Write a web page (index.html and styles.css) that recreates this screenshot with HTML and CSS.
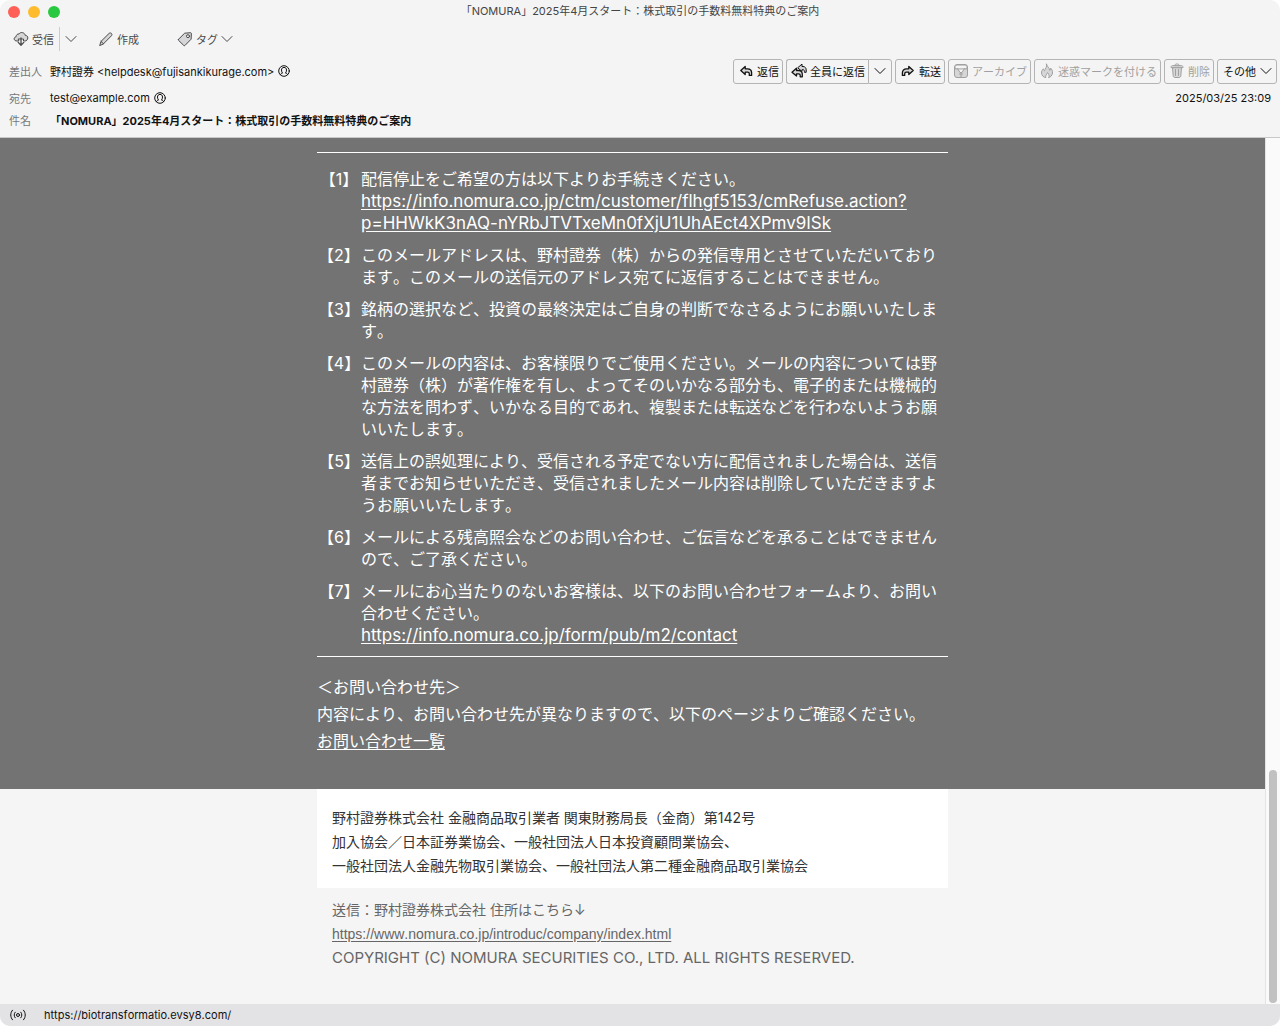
FILE: index.html
```html
<!DOCTYPE html>
<html lang="ja">
<head>
    <meta charset="UTF-8">
    <meta name="viewport" content="width=device-width, initial-scale=1.0">
    <title>「NOMURA」2025年4月スタート：株式取引の手数料無料特典のご案内</title>
    <link rel="stylesheet" href="styles.css">
</head>
<body>
    <div class="window">
        <div class="titlebar">
            <div class="lights">
                <span class="light close"></span>
                <span class="light minimize"></span>
                <span class="light zoom"></span>
            </div>
            <div class="window-title">「NOMURA」2025年4月スタート：株式取引の手数料無料特典のご案内</div>
        </div>

        <div class="toolbar">
            <button class="tool receive">
                <svg class="icon" viewBox="0 0 16 16"><path class="tint" d="M5.500 10H4C2.300 10 1.200 9.200 1.200 7.900C1.200 6.700 2 5.900 3.100 5.700C3.200 3.800 4.500 2.800 6 3C6.800 1.800 8 1.300 9.300 1.600C11 1.900 12 3 12.200 4.300C14 4.500 14.900 5.500 14.800 7C14.700 8.800 13.500 10 11.800 10H10.500V8H5.500z"/><path class="bold" d="M8 7V14M5.200 11.400L8 14.200L10.800 11.400"/></svg>
                受信
            </button>
            <button class="tool split" aria-label="受信メニュー">
                <svg class="chevron" viewBox="0 0 12 12"><path d="M1 3.500L6 8.500L11 3.500"/></svg>
            </button>
            <button class="tool compose">
                <svg class="icon" viewBox="0 0 16 16"><path class="tint" d="M1.800 14.200L3 10.400L11 2.500C11.800 1.700 12.700 1.700 13.400 2.400C14.100 3.100 14.100 4 13.400 4.800L5.500 12.800z"/><path d="M3 10.400L5.500 12.800"/></svg>
                作成
            </button>
            <button class="tool">
                <svg class="icon" viewBox="0 0 16 16"><path class="tint" d="M1.500 8.300L7.700 2.200L13.500 1.700C14 1.700 14.400 2 14.400 2.600L14.100 8.200L8 14.400C7.600 14.800 7.100 14.800 6.700 14.400L1.500 9.300C1.200 9 1.200 8.600 1.500 8.300z"/><circle class="hole" cx="11" cy="5.200" r="1.500"/></svg>
                タグ
                <svg class="chevron" viewBox="0 0 12 12"><path d="M1 3.500L6 8.500L11 3.500"/></svg>
            </button>
        </div>

        <div class="header">
            <div class="row row-from">
                <span class="label">差出人</span>
                <span class="value">野村證券 &lt;helpdesk@fujisankikurage.com&gt;</span>
                <svg class="person" viewBox="0 0 12 12"><circle cx="6" cy="6" r="5.300"/><path d="M2.200 9.700C2.500 8.800 3.500 8.600 4.500 8.100C3.900 7.300 3.500 6.500 3.500 5C3.500 3.400 4.500 2.400 6 2.400S8.500 3.400 8.500 5C8.500 6.500 8.100 7.300 7.500 8.100C8.500 8.600 9.500 8.800 9.800 9.700"/></svg>
                <div class="actions">
                    <button class="action">
                        <svg class="icon" viewBox="0 0 16 16"><path class="tint bold" d="M7.200 3.500V5.800H9.500C12 5.800 13.600 7.500 13.600 9.800V12.400H11.300V10.800C11.300 9.700 10.700 9.200 9.700 9.200H7.200V11.500L2.800 7.500z"/></svg>
                        返信
                    </button>
                    <div class="action-pair">
                        <button class="action">
                            <svg class="icon" viewBox="0 0 16 16"><path class="tint" d="M11 1.500V3.500H12C14 3.500 15.200 5 15.200 7V9.300H13.400V8.300C13.400 7.200 12.800 6.700 11.900 6.700H11V8.500L7 5z"/><path class="tint bold" d="M5.500 5.300V7.500H7.800C10 7.500 11.300 9.200 11.300 11.200V13.800H9.200V12.300C9.200 11.200 8.600 10.800 7.700 10.800H5.500V13L1 9.200z"/></svg>
                            全員に返信
                        </button>
                        <button class="action drop" aria-label="返信メニュー">
                            <svg class="chevron" viewBox="0 0 12 12"><path d="M1 3.500L6 8.500L11 3.500"/></svg>
                        </button>
                    </div>
                    <button class="action">
                        <svg class="icon" viewBox="0 0 16 16"><path class="tint bold" d="M8.800 3.500V5.800H6.500C4 5.800 2.400 7.500 2.400 9.800V12.400H4.700V10.800C4.700 9.700 5.300 9.200 6.300 9.200H8.800V11.500L13.200 7.500z"/></svg>
                        転送
                    </button>
                    <button class="action" disabled>
                        <svg class="icon" viewBox="0 0 16 16"><rect class="tint" x="1.500" y="1.500" width="13" height="13" rx="2.500"/><path class="hole" d="M2 5.500V3.500L3.500 2H12.500L14 3.500V5.500zM4.500 5.500L7 9.500H9L11.500 5.500"/><path d="M8 9.500V14.500M6.500 11H9.500"/></svg>
                        アーカイブ
                    </button>
                    <button class="action" disabled>
                        <svg class="icon" viewBox="0 0 16 16"><path class="tint" d="M7.500 1.200C8.200 4 10.500 4.500 10.700 7.500C11.500 7 11.600 6 11.400 5C13 6.300 13.800 8 13.500 10C13.200 12.500 11.500 14.300 9.500 14.600C10.800 13 10 11 8.500 9.500C8.200 11.500 6 12.200 6.800 14.600C4.500 14.300 2.700 12.500 2.500 10.200C2.400 8.300 3.200 7 4.300 5.800C4.500 7 4.800 7.500 5.500 7.800C6 5.500 8.300 4.500 7.500 1.200z"/></svg>
                        迷惑マークを付ける
                    </button>
                    <button class="action" disabled>
                        <svg class="icon" viewBox="0 0 16 16"><path class="tint" d="M3.500 4.500L4.200 12.800C4.300 13.900 4.900 14.500 6 14.500H10C11.100 14.500 11.700 13.900 11.800 12.800L12.500 4.500z"/><path d="M2 4.300C2 3 2.600 2.600 3.700 2.600H12.300C13.400 2.600 14 3 14 4.300zM6 2.500C6 1.200 6.500 1 8 1S10 1.200 10 2.500M6.500 6.500V12.500M9.500 6.500V12.500"/></svg>
                        削除
                    </button>
                    <button class="action more">
                        その他
                        <svg class="chevron" viewBox="0 0 12 12"><path d="M1 3.500L6 8.500L11 3.500"/></svg>
                    </button>
                </div>
            </div>
            <div class="row">
                <span class="label">宛先</span>
                <span class="value">test@example.com</span>
                <svg class="person" viewBox="0 0 12 12"><circle cx="6" cy="6" r="5.300"/><path d="M2.200 9.700C2.500 8.800 3.500 8.600 4.500 8.100C3.900 7.300 3.500 6.500 3.500 5C3.500 3.400 4.500 2.400 6 2.400S8.500 3.400 8.500 5C8.500 6.500 8.100 7.300 7.500 8.100C8.500 8.600 9.500 8.800 9.800 9.700"/></svg>
                <time class="date">2025/03/25 23:09</time>
            </div>
            <div class="row">
                <span class="label">件名</span>
                <span class="value subject">「NOMURA」2025年4月スタート：株式取引の手数料無料特典のご案内</span>
            </div>
        </div>

        <div class="pane">
            <div class="message">
                <div class="notice">
                    <div class="column">
                        <ul class="terms">
                            <li><span class="num">【1】</span><div>配信停止をご希望の方は以下よりお手続きください。<br><a href="#">https://info.nomura.co.jp/ctm/customer/flhgf5153/cmRefuse.action?<wbr>p=HHWkK3nAQ-nYRbJTVTxeMn0fXjU1UhAEct4XPmv9ISk</a></div></li>
                            <li><span class="num">【2】</span><div>このメールアドレスは、野村證券（株）からの発信専用とさせていただいております。このメールの送信元のアドレス宛てに返信することはできません。</div></li>
                            <li><span class="num">【3】</span><div>銘柄の選択など、投資の最終決定はご自身の判断でなさるようにお願いいたします。</div></li>
                            <li><span class="num">【4】</span><div>このメールの内容は、お客様限りでご使用ください。メールの内容については野村證券（株）が著作権を有し、よってそのいかなる部分も、電子的または機械的な方法を問わず、いかなる目的であれ、複製または転送などを行わないようお願いいたします。</div></li>
                            <li><span class="num">【5】</span><div>送信上の誤処理により、受信される予定でない方に配信されました場合は、送信者までお知らせいただき、受信されましたメール内容は削除していただきますようお願いいたします。</div></li>
                            <li><span class="num">【6】</span><div>メールによる残高照会などのお問い合わせ、ご伝言などを承ることはできませんので、ご了承ください。</div></li>
                            <li><span class="num">【7】</span><div>メールにお心当たりのないお客様は、以下のお問い合わせフォームより、お問い合わせください。<br><a href="#">https://info.nomura.co.jp/form/pub/m2/contact</a></div></li>
                        </ul>
                        <div class="contact">
                            <p>＜お問い合わせ先＞</p>
                            <p>内容により、お問い合わせ先が異なりますので、以下のページよりご確認ください。</p>
                            <p><a href="#">お問い合わせ一覧</a></p>
                        </div>
                    </div>
                </div>
                <div class="column company">
                    <p>野村證券株式会社 金融商品取引業者 関東財務局長（金商）第142号</p>
                    <p>加入協会／日本証券業協会、一般社団法人日本投資顧問業協会、</p>
                    <p>一般社団法人金融先物取引業協会、一般社団法人第二種金融商品取引業協会</p>
                </div>
                <div class="column sender">
                    <p>送信：野村證券株式会社 住所はこちら↓</p>
                    <p><a href="#">https://www.nomura.co.jp/introduc/company/index.html</a></p>
                    <p class="copyright">COPYRIGHT (C) NOMURA SECURITIES CO., LTD. ALL RIGHTS RESERVED.</p>
                </div>
            </div>
            <div class="scrollbar"><div class="thumb"></div></div>
        </div>

        <div class="statusbar">
            <svg class="signal" viewBox="0 0 18 12"><circle cx="9" cy="6" r="1.500"/><path d="M6.200 3.200C4.800 4.800 4.800 7.200 6.200 8.800M11.800 3.200C13.200 4.800 13.200 7.200 11.800 8.800M3.500 1.200C1.100 3.800 1.100 8.200 3.500 10.800M14.500 1.200C16.900 3.800 16.900 8.200 14.500 10.800"/></svg>
            <span>https://biotransformatio.evsy8.com/</span>
        </div>
    </div>
</body>
</html>
```
FILE: styles.css
```css
* {
    box-sizing: border-box;
}
body {
    margin: 0;
    background-color: #fff;
    color: #111;
    font-family: Inter, "Noto Sans CJK JP", sans-serif;
    font-size: 11px;
    font-kerning: none;
}
p, ul {
    margin: 0;
    padding: 0;
}
svg {
    flex: none;
    fill: none;
    stroke: currentColor;
    stroke-linecap: round;
    stroke-linejoin: round;
}
button {
    display: flex;
    align-items: center;
    padding: 0;
    border: none;
    background: none;
    color: inherit;
    font: inherit;
    white-space: nowrap;
}
.window {
    display: flex;
    flex-direction: column;
    min-height: 100vh;
    overflow: hidden;
    border-radius: 10px;
    background-color: #f4f4f4;
}

/* title bar */
.titlebar {
    display: grid;
    grid-template-columns: 1fr auto 1fr;
    align-items: center;
    height: 24px;
    padding: 0 8px;
}
.lights {
    display: flex;
    gap: 8px;
}
.light {
    width: 12px;
    height: 12px;
    border-radius: 50%;
}
.close {
    background-color: #fe5f57;
}
.minimize {
    background-color: #febb2e;
}
.zoom {
    background-color: #28c840;
}
.window-title {
    padding-bottom: 2px;
    color: #444;
    line-height: 20px;
}

/* toolbar */
.toolbar {
    display: flex;
    align-items: center;
    height: 30px;
    padding: 0 13px;
    color: #4a4a4a;
}
.tool {
    height: 24px;
    gap: 3px;
}
.receive {
    padding-right: 5px;
}
.split {
    padding: 0 5px;
    border-left: 1px solid #ccc;
}
.compose {
    margin: 0 38px 0 16px;
}
.icon {
    width: 16px;
    height: 16px;
}
.tint {
    fill: #d6d6d8;
}
.hole {
    fill: #f4f4f4;
}
.bold {
    stroke-width: 1.3;
}
.chevron {
    width: 12px;
    height: 12px;
}

/* message header */
.header {
    padding: 2px 3px 6px 9px;
    border-bottom: 1px solid #c8c8c8;
}
.row {
    display: flex;
    align-items: center;
    height: 22px;
}
.row-from {
    height: 31px;
    padding-bottom: 1px;
}
.label {
    width: 41px;
    color: #777;
}
.person {
    width: 12px;
    height: 12px;
    margin-left: 4px;
}
.subject {
    font-weight: bold;
}
.date {
    margin-left: auto;
    padding-right: 6px;
}
.actions {
    display: flex;
    gap: 3px;
    margin-left: auto;
}
.action {
    height: 25px;
    gap: 3px;
    padding: 0 3px 0 4px;
    border: 1px solid #b4b4b4;
    border-radius: 3px;
}
.action:disabled {
    color: #a0a0a0;
}
.action-pair {
    display: flex;
}
.action-pair .action:first-child {
    border-right: none;
    border-radius: 3px 0 0 3px;
}
.action-pair .drop {
    padding: 0 5px;
    border-radius: 0 3px 3px 0;
}
.more {
    gap: 4px;
    padding: 0 4px 0 5px;
}

/* message */
.pane {
    display: flex;
    flex: 1;
}
.message {
    flex: 1;
    background-color: #f5f5f5;
}
.column {
    max-width: 631px;
    margin: 0 auto;
}
.notice {
    padding: 14px 0 34px;
    background-color: #737373;
    color: #fff;
    font-size: 16px;
    line-height: 22px;
}
.message a {
    color: inherit;
    text-underline-offset: 2px;
}
.terms {
    display: flex;
    flex-direction: column;
    gap: 10px;
    padding: 15px 0 10px;
    border: solid #fff;
    border-width: 1px 0;
    list-style: none;
}
.terms li {
    display: grid;
    grid-template-columns: 44px 1fr;
}
.num {
    text-align: center;
}
.terms a {
    font-size: 17px;
    font-kerning: normal;
}
.contact {
    padding-top: 17px;
    line-height: 27px;
}
.company {
    padding: 17px 15px 10px;
    background-color: #fff;
    color: #333;
    font-size: 14px;
    line-height: 24px;
}
.sender {
    padding: 10px 15px 34px;
    color: #666;
    font-size: 14px;
    line-height: 24px;
}
.sender a {
    font-family: "Liberation Sans", Arial, sans-serif;
}
.copyright {
    font-size: 15px;
    font-kerning: normal;
}
.scrollbar {
    display: flex;
    flex-direction: column;
    justify-content: flex-end;
    width: 15px;
    padding: 1px 3px;
    border-left: 1px solid #e4e4e4;
    background-color: #fafafa;
}
.thumb {
    height: 27%;
    border-radius: 4px;
    background-color: #c1c1c1;
}

/* status bar */
.statusbar {
    display: flex;
    align-items: center;
    gap: 17px;
    height: 22px;
    padding: 0 9px;
    background-color: #e3e3e5;
}
.signal {
    width: 18px;
    height: 12px;
}
```
